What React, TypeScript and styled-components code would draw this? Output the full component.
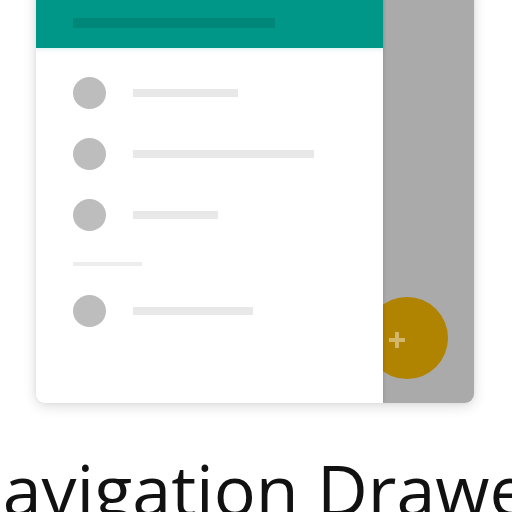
import styled, { createGlobalStyle } from 'styled-components'

const GlobalStyle = createGlobalStyle`
  html, body {
    margin: 0;
    padding: 0;
    background: #ffffff;
  }
  body {
    font-family: 'Open Sans', 'Liberation Sans', sans-serif;
  }
`

const rows = [
  { line: 105 },
  { line: 181 },
  { line: 85 },
  { divider: true },
  { line: 120 },
]

const App = () => {
  return (
    <>
      <GlobalStyle />
      <Page>
        <Card>
          <Drawer>
            <Header>
              <HeaderBar />
            </Header>
            <List>
              {rows.map((row, i) =>
                row.divider ? (
                  <Divider key={i} />
                ) : (
                  <Row key={i}>
                    <Avatar />
                    <Line $width={row.line ?? 100} />
                  </Row>
                )
              )}
            </List>
          </Drawer>
          <Scrim />
          <Fab>
            <Plus />
          </Fab>
        </Card>
        <Title>Navigation Drawer</Title>
      </Page>
    </>
  )
}

export default App

const Page = styled.div`
  width: 512px;
  height: 512px;
  overflow: hidden;
  position: relative;
`

const Card = styled.div`
  position: relative;
  display: flex;
  width: 438px;
  height: 423px;
  margin: -20px 0 0 36px;
  border-radius: 9px;
  overflow: hidden;
  background: #ffffff;
  box-shadow: 0 3px 14px rgba(0, 0, 0, 0.14), 0 0 5px rgba(0, 0, 0, 0.06);
`

const Drawer = styled.div`
  position: relative;
  z-index: 2;
  width: 347px;
  display: flex;
  flex-direction: column;
  background: #ffffff;
  box-shadow: 1px 0 3px rgba(0, 0, 0, 0.12);
`

const Header = styled.div`
  height: 68px;
  box-sizing: border-box;
  padding: 38px 0 0 37px;
  background: #009688;
  box-shadow: 0 2px 4px rgba(0, 150, 136, 0.12);
`

const HeaderBar = styled.div`
  width: 202px;
  height: 10px;
  background: #00877a;
`

const List = styled.div`
  display: flex;
  flex-direction: column;
  padding-top: 14px;
`

const Row = styled.div`
  height: 61px;
  display: flex;
  align-items: center;
  padding-left: 37px;
  gap: 27px;
`

const Avatar = styled.div`
  width: 33px;
  height: 32px;
  border-radius: 50%;
  background: #bdbdbd;
`

const Line = styled.div<{ $width: number }>`
  width: ${(p) => p.$width}px;
  height: 8px;
  background: #e8e8e8;
`

const Divider = styled.div`
  width: 69px;
  height: 4px;
  margin: 17px 0 14px 37px;
  background: #ededed;
`

const Scrim = styled.div`
  flex: 1;
  background: #aaaaaa;
`

const Fab = styled.div`
  position: absolute;
  z-index: 1;
  left: 330px;
  top: 317px;
  width: 82px;
  height: 82px;
  border-radius: 50%;
  background: #b08300;
`

const Plus = styled.div`
  position: absolute;
  left: 23px;
  top: 35px;
  width: 16px;
  height: 16px;

  &::before,
  &::after {
    content: '';
    position: absolute;
    background: #d2b769;
  }
  &::before {
    left: 0;
    top: 6px;
    width: 16px;
    height: 4px;
  }
  &::after {
    left: 6px;
    top: 0;
    width: 4px;
    height: 16px;
  }
`

const Title = styled.div`
  margin: 51px 0 0 -50px;
  white-space: nowrap;
  font-size: 70px;
  line-height: 1;
  color: #111111;
`
